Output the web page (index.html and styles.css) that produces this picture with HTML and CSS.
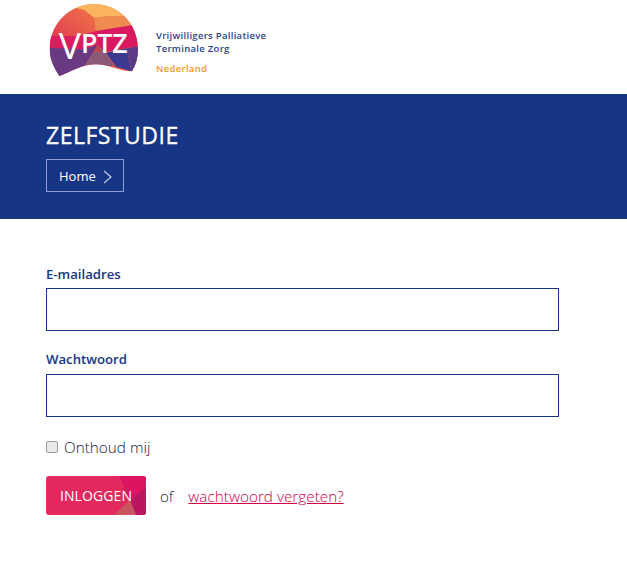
FILE: index.html
```html
<!DOCTYPE html>
<html lang="en">
<head>
    <meta charset="UTF-8">
    <meta name="viewport" content="width=device-width, initial-scale=1.0">
    <title>Zelfstudie</title>
    <link rel="stylesheet" href="styles.css">
</head>
<body>
    <!-- Logo -->
    <div class="topbar">
        <svg class="logo-mark" viewBox="48 3 285 228" width="95" height="76">
            <defs>
                <clipPath id="dome">
                    <path d="M88 228 C70 200 59 175 59 148 C59 70 120 12 192 12 C265 12 324 70 324 148 C324 172 318 195 306 214 C270 214 235 193 197 193 C155 193 125 215 88 228 Z"/>
                </clipPath>
                <linearGradient id="warm" x1="0" y1="1" x2="1" y2="0">
                    <stop offset="0.1" stop-color="#dc2458"/>
                    <stop offset="0.75" stop-color="#f07a45"/>
                </linearGradient>
            </defs>
            <g clip-path="url(#dome)">
                <rect x="48" y="3" width="285" height="228" fill="url(#warm)"/>
                <polygon points="130,22 190,8 250,20 284,48 240,48 193,53 163,30" fill="#fbb55e"/>
                <polygon points="193,53 240,48 284,48 300,68 304,78 235,88 198,93" fill="#ef8a50"/>
                <polygon points="198,93 304,76 330,90 330,138 228,155 203,138" fill="#d9195f"/>
                <polygon points="50,108 150,108 198,93 203,138 158,148 55,143" fill="#db1d60"/>
                <polygon points="50,143 158,148 203,136 163,198 88,235 50,200" fill="#693a82"/>
                <polygon points="203,136 228,158 253,198 163,198" fill="#8c5a78"/>
                <polygon points="228,158 290,145 304,214 258,200" fill="#3c3a8f"/>
                <polygon points="290,145 330,138 330,225 304,214" fill="#5c3a88"/>
                <polygon points="190,155 203,136 216,155" fill="#c8423f"/>
            </g>
            <text class="logo-vptz" x="86" y="178"><tspan class="logo-v">V</tspan><tspan dy="-20">PTZ</tspan></text>
        </svg>
        <div class="logo-text">
            <span>Vrijwilligers Palliatieve</span>
            <span>Terminale Zorg</span>
            <span class="logo-country">Nederland</span>
        </div>
    </div>

    <!-- Page title -->
    <div class="banner">
        <h1>ZELFSTUDIE</h1>
        <a class="crumb" href="#"><span>Home</span>
            <svg viewBox="0 0 9 14" width="9" height="14"><path d="M1 1 L8 7 L1 13" fill="none" stroke="#c3cce6" stroke-width="1.2"/></svg>
        </a>
    </div>

    <!-- Login form -->
    <form class="login">
        <label for="email">E-mailadres</label>
        <input type="text" id="email" name="email">

        <label class="second" for="password">Wachtwoord</label>
        <input type="password" id="password" name="password">

        <div class="remember">
            <input type="checkbox" id="remember" name="remember">
            <label for="remember">Onthoud mij</label>
        </div>

        <div class="actions">
            <button type="submit">
                <svg class="btn-facets" viewBox="0 0 100 39" preserveAspectRatio="none">
                    <polygon points="73,0 100,0 100,12 84,24" fill="#dc1462"/>
                    <polygon points="84,24 100,12 100,39 90,39" fill="#b9165f"/>
                    <polygon points="68,39 84,24 90,39" fill="#c9555f"/>
                </svg>
                <span>INLOGGEN</span>
            </button>
            <span class="or">of</span>
            <a href="#">wachtwoord vergeten?</a>
        </div>
    </form>
</body>
</html>
```

FILE: styles.css
```css
/* General Styles */
* {
    margin: 0;
    padding: 0;
    box-sizing: border-box;
}
body {
    font-family: "Open Sans", "Noto Sans", sans-serif;
    background: white;
    color: #101a3a;
}
.topbar {
    display: flex;
    align-items: flex-start;
    gap: 15px;
    height: 94px;
    padding: 1px 0 0 46px;
}
.logo-mark {
    display: block;
}
.logo-vptz {
    font-family: "Open Sans", sans-serif;
    font-size: 80px;
    font-weight: 600;
    fill: white;
}
.logo-v {
    font-size: 112px;
    font-weight: 400;
}
.logo-text {
    display: flex;
    flex-direction: column;
    padding-top: 28px;
    font-size: 9.5px;
    font-weight: 600;
    line-height: 13px;
    letter-spacing: 0.3px;
    color: #2b3f8c;
}
.logo-country {
    margin-top: 7px;
    color: #f3982e;
}
.banner {
    height: 125px;
    padding: 26px 46px 0;
    background-color: #163585;
    color: white;
}
.banner h1 {
    font-size: 23px;
    font-weight: 400;
    line-height: 30px;
    letter-spacing: 0.5px;
    -webkit-text-stroke: 0.3px white;
}
.crumb {
    display: inline-flex;
    align-items: center;
    gap: 7px;
    height: 33px;
    margin-top: 9px;
    padding: 0 11px 0 12px;
    border: 1px solid #8f9fd2;
    color: white;
    font-size: 13px;
    text-decoration: none;
}
.crumb span {
    padding-top: 1px;
}
.crumb svg {
    margin-top: 2px;
}
.login {
    display: flex;
    flex-direction: column;
    width: 513px;
    margin: 45px 0 0 46px;
}
.login > label {
    font-size: 13.2px;
    font-weight: 600;
    line-height: 20px;
    color: #163585;
    margin-bottom: 4px;
}
.login > label.second {
    margin-top: 18px;
    margin-bottom: 5px;
}
.login > input {
    height: 43px;
    border: 1px solid #163585;
    background: white;
}
.remember {
    display: flex;
    align-items: center;
    gap: 6px;
    margin-top: 19px;
    font-size: 15.3px;
    font-weight: 300;
    line-height: 22px;
}
.remember input {
    width: 12px;
    height: 12px;
    appearance: none;
    border: 1px solid #9a9a9a;
    border-radius: 2px;
    background: #e9e9e9;
}
.actions {
    display: flex;
    align-items: center;
    margin-top: 18px;
    font-size: 15px;
    font-weight: 300;
}
.actions button {
    position: relative;
    width: 100px;
    height: 39px;
    overflow: hidden;
    border: none;
    border-radius: 3px;
    background-color: #e4295f;
    color: white;
    font-family: inherit;
    font-size: 14px;
    letter-spacing: 0.1px;
}
.actions button span {
    position: relative;
}
.btn-facets {
    position: absolute;
    top: 0;
    left: 0;
    width: 100%;
    height: 100%;
}
.or {
    margin: 0 15px 0 14px;
}
.actions a {
    color: #d0004a;
    font-size: 15.3px;
}
```
